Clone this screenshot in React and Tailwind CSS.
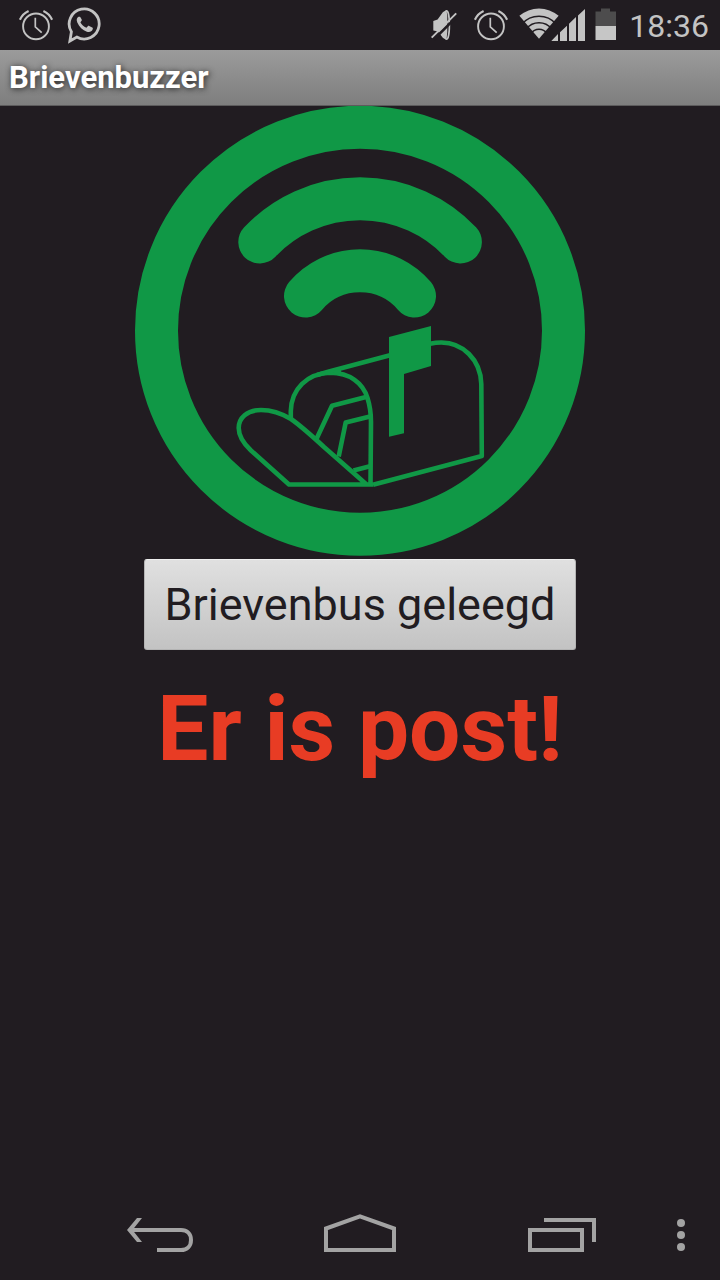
function AlarmIcon() {
  return (
    <svg className="h-[50px] w-9 shrink-0" viewBox="0 0 36 50" fill="none" stroke="#c3c3c3" aria-hidden="true">
      <circle cx="18" cy="26.4" r="12.9" strokeWidth="1.9" />
      <path d="M17.3 17.8V26.8L23.7 32.6" strokeWidth="1.7" />
      <path d="M1.9 19.8C3.6 16 6.6 12.8 10.6 11M34.1 19.8C32.4 16 29.4 12.8 25.4 11" strokeWidth="2.2" />
    </svg>
  );
}

function ChatIcon() {
  return (
    <svg className="h-[50px] w-9 shrink-0" viewBox="0 0 36 50" aria-hidden="true">
      <path d="M10.8 37A15 15 0 1 0 5.4 31.8L3.9 41Z" fill="none" stroke="#c3c3c3" strokeWidth="2.8" />
      <path
        d="M12.5 16.8c-1.8 1-2.3 3-1.2 5.6c1.8 4.4 5.4 7.6 9.6 9.3c2.6 1 5-.2 5.8-2.4c.3-.8.2-1.5-.5-1.9l-3-1.5c-.6-.3-1-.2-1.4.3l-1.4 1.6c-2.7-1-4.8-3-6-5.5l1.2-1.6c.3-.4.3-.8.1-1.3l-1.3-2.2c-.3-.5-1-.6-1.9-.4z"
        fill="#c3c3c3"
      />
    </svg>
  );
}

function MutedIcon() {
  return (
    <svg className="h-[50px] w-9 shrink-0" viewBox="0 0 36 50" aria-hidden="true">
      <ellipse cx="17.6" cy="25" rx="2.8" ry="14.2" fill="#211c21" stroke="#c3c3c3" strokeWidth="1.6" />
      <path d="M4.3 21L8.6 19.500L14 12L17.500 10.300L18.300 16V32L17.500 39.700L14 38L9 31.500L4.300 30.500Z" fill="#c3c3c3" />
      <path d="M4.800 39.500L29.300 15.200" stroke="#211c21" strokeWidth="2.6" />
      <path d="M2.7 37.6L27.2 13.3" stroke="#c3c3c3" strokeWidth="1.9" />
    </svg>
  );
}

function SignalIcon() {
  return (
    <svg className="h-[50px] w-[70px] shrink-0" viewBox="0 0 70 50" aria-hidden="true">
      <path d="M22 38.8L2.4 15.8A30 30 0 0 1 41.6 15.8Z" fill="#c3c3c3" />
      <g fill="none" stroke="#211c21" strokeWidth="1.4">
        <path d="M5 23.9A22.6 22.6 0 0 1 39 23.9" />
        <path d="M9.4 28.9A16 16 0 0 1 34.6 28.9" />
        <path d="M14 33.4A9.7 9.7 0 0 1 30 33.4" />
      </g>
      <path d="M34.3 41L41 34V41ZM43 41V32.2L50 25.7V41ZM52 41V23.8L59 17V41ZM61 41V15.6L68 9V41Z" fill="#c3c3c3" />
    </svg>
  );
}

function BatteryIcon() {
  return (
    <svg className="h-[50px] w-[22px] shrink-0" viewBox="0 0 22 50" aria-hidden="true">
      <path d="M0.5 11.5H6V8.5H15V11.5H21V26H0.5Z" fill="#4d4c4d" />
      <path d="M0.5 26H21V40H0.5Z" fill="#c6c6c6" />
    </svg>
  );
}

function MailboxLogo() {
  return (
    <svg className="w-5/8" viewBox="135 106 450 450" role="img" aria-label="Brievenbus" fill="none" stroke="#109846">
      <circle cx="360" cy="330.7" r="203.5" strokeWidth="43" />
      <g strokeWidth="43" strokeLinecap="round">
        <path d="M259.8 242A138 138 0 0 1 460.4 242" />
        <path d="M305.5 296A71.5 71.5 0 0 1 414.5 296" />
      </g>
      <g strokeWidth="4.6" strokeLinejoin="round">
        <path d="M366 484L324 447C311 435 301 426 291 419C280 412.5 271 410 261 410C247 410 238.7 418 238.7 428C238.7 435 243 443 251 450.5L289 484.5H373" />
        <path d="M290.8 419V411C291.5 389 307 373.5 330 372.8C350 372.8 363 383 367.5 398C370 406 371 414 371 422L370.5 484" />
        <path d="M317 375L330 371.2L390 355.3" />
        <path d="M334 372.8L341 371" />
        <path d="M430 343.8C445 340.5 459 344 469 354C477 362 481 372 481.3 384L481.8 456L373 484.8" />
        <path d="M316.7 438.5L332 405.7L367 396.7M338.7 456.5L345.7 422.5L370 416.5M353.5 470.5L370 466.3" />
      </g>
      <path d="M389 337L431 326V366L404 374V433.3L389 436.7Z" fill="#109846" stroke="none" />
    </svg>
  );
}

function NavButton({ label, className, children }) {
  return (
    <button type="button" aria-label={label} className={`flex h-24 items-center justify-center ${className}`}>
      {children}
    </button>
  );
}

export default function App() {
  return (
    <div className="flex min-h-screen flex-col bg-[#211c21] font-['Roboto','Noto_Sans',sans-serif]">
      <div className="flex h-[50px] items-center justify-between pr-[11px] pl-[18px]">
        <div className="flex gap-3">
          <AlarmIcon />
          <ChatIcon />
        </div>
        <div className="flex items-center gap-2">
          <MutedIcon />
          <AlarmIcon />
          <SignalIcon />
          <BatteryIcon />
          <time className="pt-px pl-1 text-[32px] leading-none text-[#c3c3c3]">18:36</time>
        </div>
      </div>

      <header className="flex h-14 items-center border-b border-[#5c5b5c] bg-linear-to-b from-[#9b9b9b] to-[#7e7e7e] px-[9px]">
        <h1 className="text-[31px] leading-none font-bold text-white [text-shadow:1px_1px_6px_#222]">Brievenbuzzer</h1>
      </header>

      <main className="flex grow flex-col items-center">
        <MailboxLogo />
        <button
          type="button"
          className="mt-[3px] rounded-[3px] border border-[#b4b4b4] border-t-[#eeeeee] bg-linear-to-b from-[#e0e0e0] to-[#c3c3c3] px-5 py-[18px] text-[45px] leading-[53px] text-[#211c21]"
        >
          Brievenbus geleegd
        </button>
        <p className="mt-[26px] text-[91px] leading-[106px] font-bold text-[#e83c24]">Er is post!</p>
      </main>

      <nav className="flex gap-10 pl-20" aria-label="Systeem">
        <NavButton label="Terug" className="flex-1">
          <svg className="h-12 w-18" viewBox="124 1208 72 48" fill="none" stroke="#a3a3a3" strokeWidth="4" aria-hidden="true">
            <path d="M131 1230H181C187 1230 191 1234 191 1240S187 1250 181 1250H157" />
            <path d="M137 1218H142L132.5 1230L142 1242H137L127 1230Z" fill="#a3a3a3" stroke="none" />
          </svg>
        </NavButton>
        <NavButton label="Startscherm" className="flex-1">
          <svg className="h-12 w-18" viewBox="324 1208 72 48" fill="none" stroke="#a3a3a3" strokeWidth="4" aria-hidden="true">
            <path d="M326 1250V1228.5L360 1216.3L394 1228.5V1250Z" />
          </svg>
        </NavButton>
        <NavButton label="Recente apps" className="flex-1">
          <svg className="h-12 w-18" viewBox="524 1208 72 48" fill="none" stroke="#a3a3a3" strokeWidth="4" aria-hidden="true">
            <path d="M530 1230H582V1250H530ZM544 1220H594V1242" />
          </svg>
        </NavButton>
        <NavButton label="Menu" className="-ml-10 w-20">
          <svg className="h-12 w-4" viewBox="672 1208 16 48" fill="#a3a3a3" aria-hidden="true">
            <circle cx="681" cy="1223" r="4" />
            <circle cx="681" cy="1235" r="4" />
            <circle cx="681" cy="1247" r="4" />
          </svg>
        </NavButton>
      </nav>
    </div>
  );
}
